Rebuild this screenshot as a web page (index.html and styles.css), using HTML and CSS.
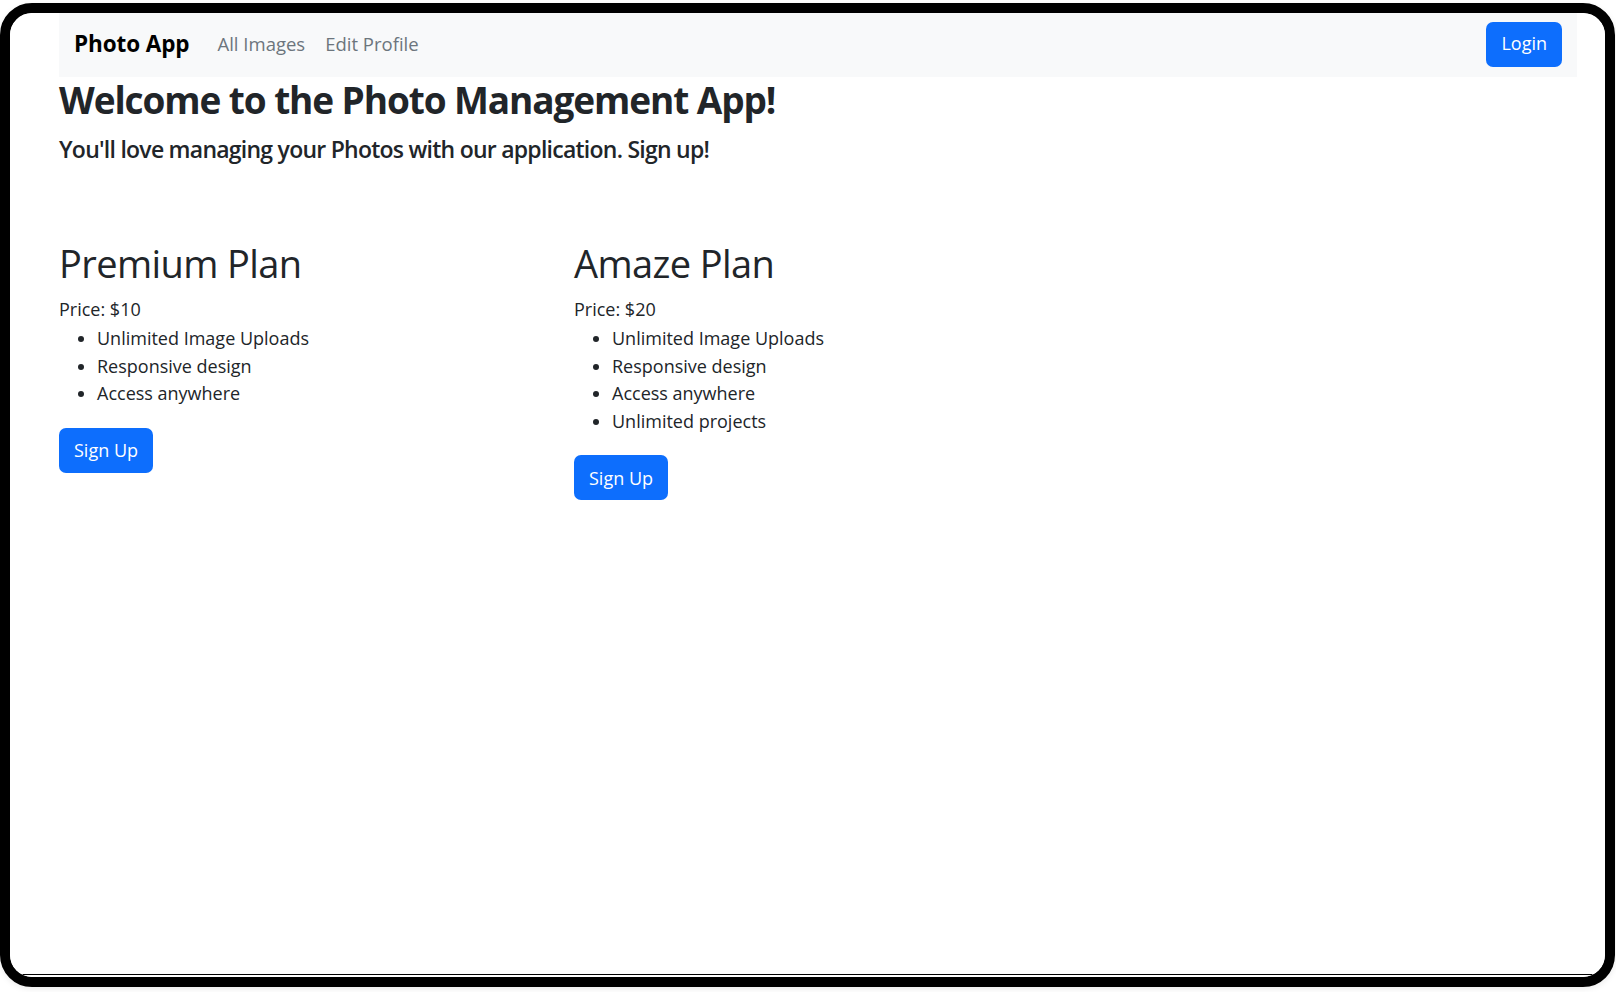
FILE: index.html
```html
<!DOCTYPE html>
<html lang="en">
<head>
<meta charset="utf-8">
<title>Photo App</title>
<link rel="stylesheet" href="styles.css">
</head>
<body>
<div class="frame">
  <div class="screen">
    <nav class="navbar">
      <div class="nav-left">
        <a class="brand" href="#">Photo App</a>
        <a class="nav-link" href="#">All Images</a>
        <a class="nav-link" href="#">Edit Profile</a>
      </div>
      <button class="btn btn-login">Login</button>
    </nav>
    <main class="content">
      <h1 class="title">Welcome to the Photo Management App!</h1>
      <p class="lead">You'll love managing your Photos with our application. Sign up!</p>
      <div class="plans">
        <section class="plan">
          <h2 class="plan-title">Premium Plan</h2>
          <p class="price">Price: $10</p>
          <ul class="features">
            <li>Unlimited Image Uploads</li>
            <li>Responsive design</li>
            <li>Access anywhere</li>
          </ul>
          <button class="btn">Sign Up</button>
        </section>
        <section class="plan">
          <h2 class="plan-title">Amaze Plan</h2>
          <p class="price">Price: $20</p>
          <ul class="features">
            <li>Unlimited Image Uploads</li>
            <li>Responsive design</li>
            <li>Access anywhere</li>
            <li>Unlimited projects</li>
          </ul>
          <button class="btn">Sign Up</button>
        </section>
      </div>
    </main>
    <div class="bottom-line"></div>
  </div>
</div>
</body>
</html>
```

FILE: styles.css
```css
* { box-sizing: border-box; }
html, body { margin: 0; padding: 0; background: #fff; }
body {
  font-family: "Open Sans", "Noto Sans", sans-serif;
  color: #212529;
  width: 1616px;
  height: 992px;
  padding-top: 3px;
}
.frame {
  width: 1615px;
  height: 984px;
  border: 10px solid #000;
  border-radius: 32px;
  box-shadow: 0 2px 6px rgba(0,0,0,0.08);
  overflow: hidden;
}
.screen {
  height: 100%;
  display: flex;
  flex-direction: column;
  border-radius: 22px;
  overflow: hidden;
  background: #fff;
}
.navbar {
  margin-left: 49px;
  margin-right: 28px;
  height: 64px;
  background: #f8f9fa;
  display: flex;
  align-items: center;
  justify-content: space-between;
  padding: 0 15px;
  flex-shrink: 0;
}
.nav-left { display: flex; align-items: center; padding-bottom: 3px; }
.brand {
  font-size: 22.5px;
  font-weight: 700;
  color: #000;
  text-decoration: none;
  margin-right: 28px;
  letter-spacing: -0.1px;
}
.nav-link {
  font-size: 18.5px;
  color: #6c757d;
  text-decoration: none;
  margin-right: 20px;
}
.btn {
  font-family: inherit;
  background: #0d6efd;
  color: #fff;
  border: 0;
  border-radius: 7px;
  font-size: 18px;
  height: 45px;
  padding: 0 15px;
  cursor: pointer;
}
.btn-login { padding-bottom: 3px; margin-top: -2px; }
.content {
  flex: 1;
  padding-left: 49px;
}
.title {
  margin: 0;
  font-size: 37px;
  line-height: 46px;
  font-weight: 700;
  letter-spacing: -1.1px;
}
.lead {
  margin: 6px 0 0;
  font-size: 23px;
  line-height: 40px;
  font-weight: 600;
  letter-spacing: -0.75px;
}
.plans {
  display: flex;
  margin-top: 71px;
}
.plan { width: 515px; }
.plan-title {
  margin: 0 0 9px;
  font-size: 38px;
  line-height: 46px;
  font-weight: 500;
  letter-spacing: -0.6px;
}
.price {
  margin: 0 0 2px;
  font-size: 18px;
  line-height: 28px;
}
.features {
  margin: 0 0 20px;
  padding-left: 38px;
  font-size: 18px;
  line-height: 27.6px;
}
.bottom-line {
  height: 1px;
  background: #000;
  margin-bottom: 2px;
  flex-shrink: 0;
}
```
